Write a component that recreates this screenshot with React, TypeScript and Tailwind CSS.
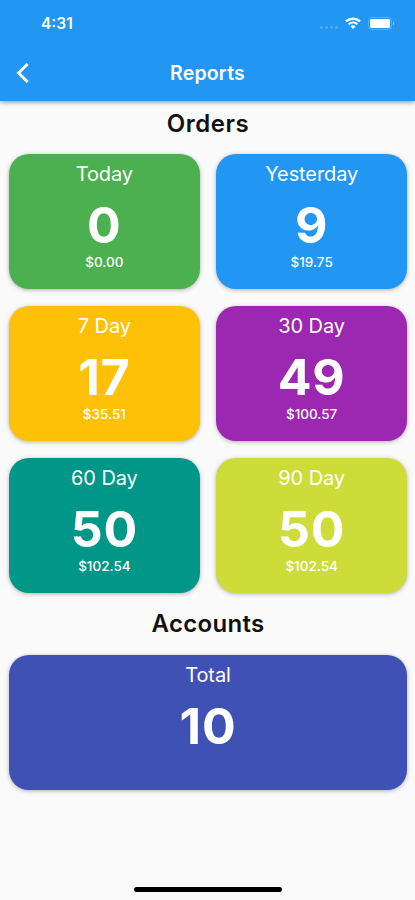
import clsx from "clsx";

interface ReportCardProps {
  title: string;
  value: number;
  amount?: string;
  color: string;
}

const orders: ReportCardProps[] = [
  { title: "Today", value: 0, amount: "$0.00", color: "bg-[#4caf50]" },
  { title: "Yesterday", value: 9, amount: "$19.75", color: "bg-[#2196f3]" },
  { title: "7 Day", value: 17, amount: "$35.51", color: "bg-[#ffc107]" },
  { title: "30 Day", value: 49, amount: "$100.57", color: "bg-[#9c27b0]" },
  { title: "60 Day", value: 50, amount: "$102.54", color: "bg-[#009688]" },
  { title: "90 Day", value: 50, amount: "$102.54", color: "bg-[#cddc39]" },
];

function ReportCard({ title, value, amount, color }: ReportCardProps) {
  return (
    <div
      className={clsx(
        "flex h-[135px] flex-col items-center rounded-[20px] pt-2 text-white shadow-[0_1px_4px_rgba(0,0,0,0.3)]",
        color,
      )}
    >
      <p className="text-[20px] leading-6 tracking-[-0.1px]">{title}</p>
      <p className="mt-[11px] text-[50px] leading-14 font-bold tracking-[0.8px]">{value}</p>
      {amount && <p className="-mt-px text-[13.5px] leading-5 font-medium">{amount}</p>}
    </div>
  );
}

function StatusBar() {
  return (
    <div className="flex h-[46px] items-center justify-between pr-[20px] pl-[41px]">
      <span className="mt-0.5 text-[15.5px] leading-5 font-semibold">4:31</span>
      <div className="flex items-center">
        <div className="mt-2 mr-[7px] flex gap-[2px] opacity-20">
          <span className="size-[3px] rounded-full bg-white" />
          <span className="size-[3px] rounded-full bg-white" />
          <span className="size-[3px] rounded-full bg-white" />
          <span className="size-[3px] rounded-full bg-white" />
        </div>
        <svg className="-mt-px" width="16" height="12" viewBox="0 0 16 12" fill="none" stroke="white">
          <path d="M1 4.4C5 .7 11 .7 15 4.4" strokeWidth="2.5" />
          <path d="M3.6 7.2c2.6-2.3 6.2-2.3 8.8 0" strokeWidth="2.1" />
          <path d="M8 12 5.3 9.3c1.5-1.3 3.9-1.3 5.4 0z" fill="white" stroke="none" />
        </svg>
        <svg className="ml-[7px]" width="27" height="13" viewBox="0 0 27 13">
          <rect x=".5" y=".5" width="23" height="12" rx="3.5" fill="none" stroke="white" strokeOpacity=".25" />
          <rect x="2" y="2" width="20" height="9" rx="1.5" fill="white" />
          <path d="M25 4.5c1.6.7 1.6 3.3 0 4z" fill="white" fillOpacity=".4" />
        </svg>
      </div>
    </div>
  );
}

export default function App() {
  return (
    <div className="flex h-[900px] w-full flex-col bg-[#fafafa] font-['Inter',sans-serif] text-[#111]">
      <header className="z-10 h-[101px] bg-[#2196f3] text-white shadow-[0_1px_5px_rgba(0,0,0,0.45)]">
        <StatusBar />
        <div className="grid h-[54px] grid-cols-[56px_1fr_56px] items-center">
          <button type="button" aria-label="Back" className="pl-4">
            <svg width="13" height="20" viewBox="0 0 13 20" fill="none" stroke="white" strokeWidth="2.9">
              <path d="M11.7 1 2.5 10l9.2 9" />
            </svg>
          </button>
          <h1 className="text-center text-[19.5px] leading-7 font-semibold tracking-[0.2px]">Reports</h1>
        </div>
      </header>

      <main className="flex-1 pr-2 pl-[9px]">
        <h2 className="pt-[7px] text-center text-[24px] leading-8 font-semibold tracking-[0.5px]">Orders</h2>
        <div className="mt-[14px] grid grid-cols-2 gap-x-[16.5px] gap-y-[16.75px]">
          {orders.map((item) => (
            <ReportCard key={item.title} {...item} />
          ))}
        </div>
        <h2 className="mt-[15.5px] text-center text-[24px] leading-8 font-semibold tracking-[0.3px]">Accounts</h2>
        <div className="mt-[15px]">
          <ReportCard title="Total" value={10} color="bg-[#3f51b5]" />
        </div>
      </main>

      <div className="mx-auto mb-2 h-[5px] w-[148px] rounded-full bg-black" />
    </div>
  );
}
